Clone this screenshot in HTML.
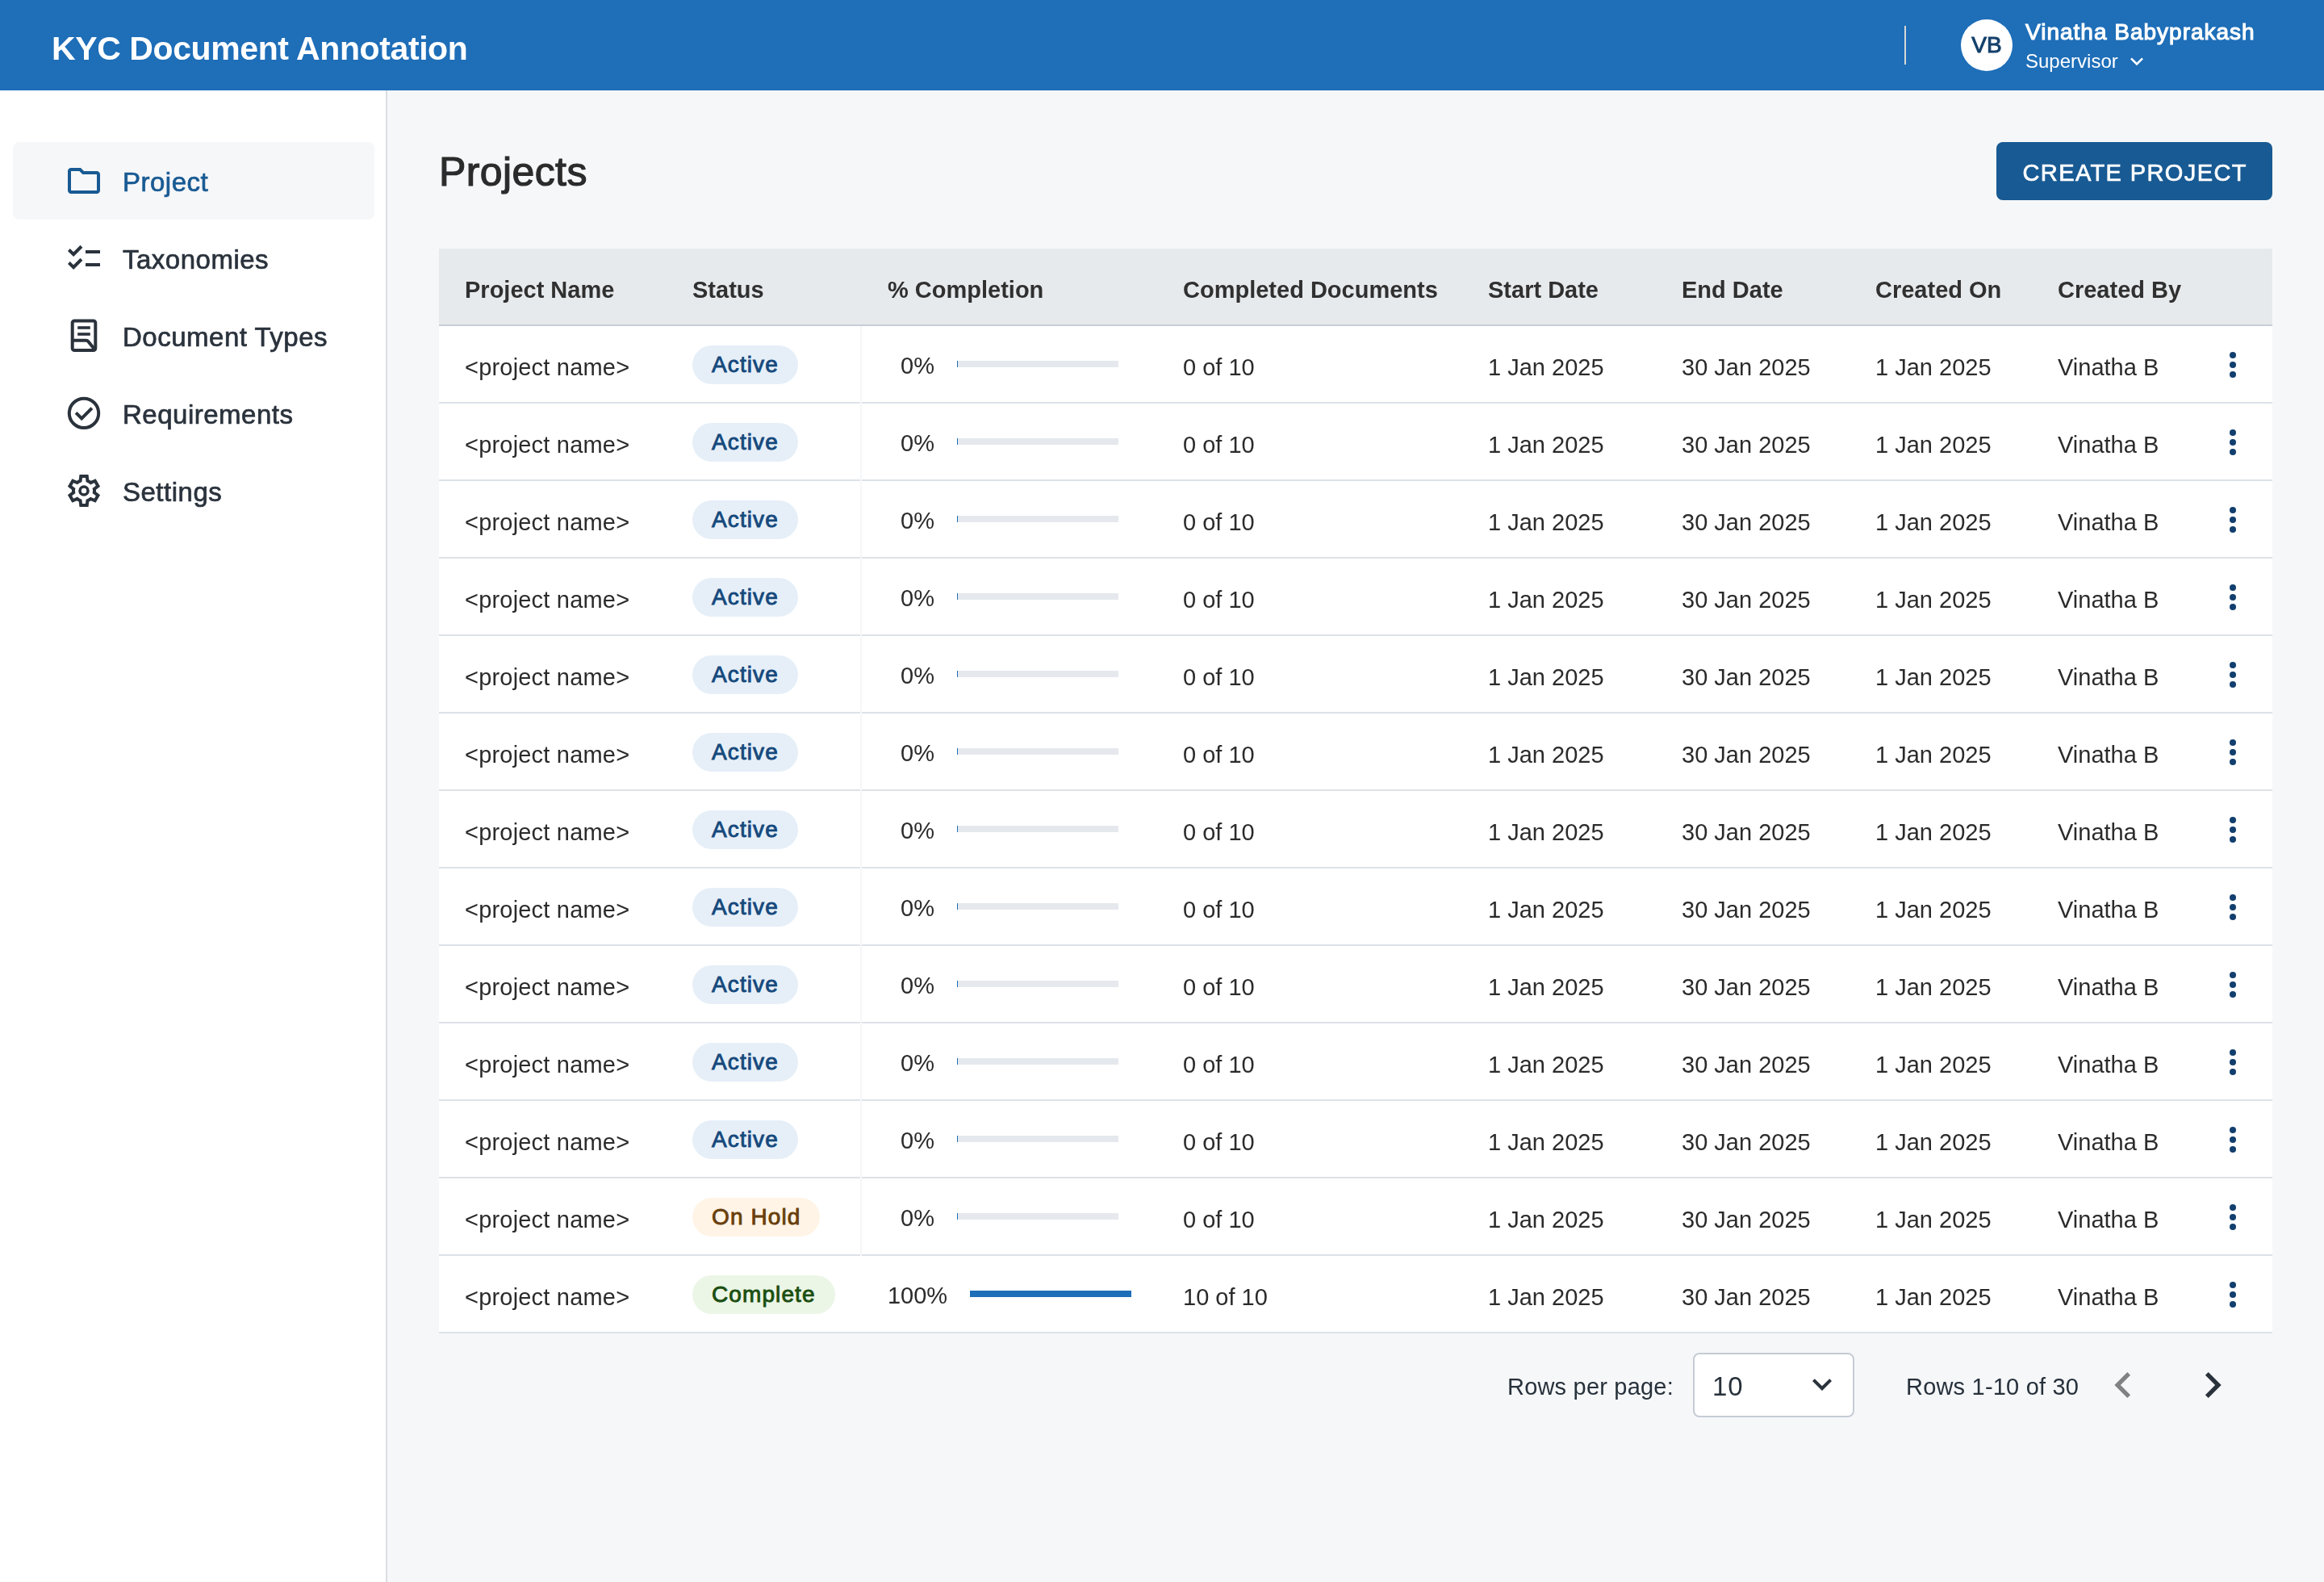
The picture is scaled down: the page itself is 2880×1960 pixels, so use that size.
<!DOCTYPE html>
<html><head><meta charset="utf-8">
<style>
*{box-sizing:border-box;margin:0;padding:0}
html,body{width:1440px;height:980px;overflow:hidden}
body{filter:grayscale(0.0001)}
@media (min-width:2000px){html{zoom:2}}
body{font-family:"Liberation Sans",sans-serif;background:#f6f7f9;color:#2b2b2b;position:relative}
.abs{position:absolute}
#hdr{position:absolute;left:0;top:0;width:1440px;height:56px;background:#1e6eb8}
#title{position:absolute;left:32px;top:2px;height:56px;line-height:56px;font-size:20.5px;font-weight:700;letter-spacing:-.2px;color:#fff;white-space:nowrap}
#vdiv{position:absolute;left:1180px;top:16px;width:1px;height:24px;background:#d8d8d8}
#avatar{position:absolute;left:1215px;top:12px;width:32px;height:32px;border-radius:50%;background:#fff;color:#14406b;-webkit-text-stroke:.5px #14406b;font-size:14px;line-height:32px;text-align:center}
#uname{position:absolute;left:1255px;top:11px;font-size:14px;-webkit-text-stroke:.55px #fff;letter-spacing:.5px;color:#fff;white-space:nowrap;line-height:18px}
#urole{position:absolute;left:1255px;top:31px;font-size:12px;color:#fff;white-space:nowrap;line-height:14px}
#side{position:absolute;left:0;top:56px;width:240px;height:924px;background:#fff;border-right:1px solid #d9dee4}
.nav{position:absolute;left:8px;width:224px;height:48px;border-radius:4px;color:#2a323c;font-size:16.5px}
.nav.act{background:#f6f7f9;color:#185a93}
.nav svg{position:absolute;left:32px;top:12px;width:24px;height:24px}
.nav span{position:absolute;left:68px;top:1px;line-height:48px;white-space:nowrap;letter-spacing:.25px;-webkit-text-stroke:.35px currentColor}
#ptitle{position:absolute;left:272px;top:92.5px;font-size:25px;line-height:28px;letter-spacing:.2px;-webkit-text-stroke:.6px #2b2b2b;color:#2b2b2b;white-space:nowrap}
#btn{position:absolute;left:1237px;top:88px;width:171px;height:36px;border-radius:4px;background:#185a93;color:#fff;font-size:14.5px;letter-spacing:.7px;-webkit-text-stroke:.35px #fff;text-align:center;line-height:36px;white-space:nowrap;padding-left:.7px}
#tbl{position:absolute;left:272px;top:154px;width:1136px}
.th{position:absolute;left:0;top:0;width:1136px;height:48px;background:#e7eaed;border-bottom:1px solid #c6cdd5}
.tr{position:absolute;left:0;width:1136px;height:48px;background:#fff;border-bottom:1px solid #dde2e8}
.c{position:absolute;top:2px;line-height:47px;font-size:14.5px;white-space:nowrap}
.th .c{font-weight:700;color:#303030}
.tr .c{letter-spacing:0}
.pn{letter-spacing:.1px!important}
.pill{position:absolute;top:12px;height:24px;border-radius:12px;line-height:24px;font-weight:400;font-size:14px;letter-spacing:.55px;-webkit-text-stroke:.45px currentColor;padding:0 12px;white-space:nowrap}
.pa{background:#e6eff8;color:#15497c}
.ph{background:#fff4e6;color:#683f0c}
.pc{background:#ebf6e6;color:#1b4e10}
.comp{position:absolute;top:0;height:47px;left:261px;width:185px;display:flex;align-items:center;justify-content:center}
.comp b{font-weight:400;font-size:14.5px;position:relative;top:1px}
.bar{margin-left:14px;width:100px;height:4px;background:#e5e9ed;position:relative}
.bar i{position:absolute;left:0;top:0;height:4px;background:#1e6eb8}
.keb{position:absolute;left:1099.5px;top:12px;width:24px;height:24px}
#sep{position:absolute;left:261px;top:48px;width:1px;height:576px;background:#f6f7f9}
.pg{position:absolute;font-size:14.5px;white-space:nowrap;letter-spacing:.1px;color:#27313b}
#sel{position:absolute;left:1049px;top:838px;width:100px;height:40px;border:1px solid #c5ccd5;border-radius:4px;background:#fff}
</style></head><body>
<div id="hdr">
  <div id="title">KYC Document Annotation</div>
  <div id="vdiv"></div>
  <div id="avatar">VB</div>
  <div id="uname">Vinatha Babyprakash</div>
  <div id="urole">Supervisor</div>
  <svg class="abs" style="left:1316px;top:30px" width="16" height="16" viewBox="0 0 24 24"><path fill="#fff" d="M16.59 8.59L12 13.17 7.41 8.59 6 10l6 6 6-6z"/></svg>
</div>
<div id="side">
<div class="nav act" style="top:32px"><svg viewBox="0 -960 960 960"><path fill="currentColor" d="M160-160q-33 0-56.5-23.5T80-240v-480q0-33 23.5-56.5T160-800h240l80 80h320q33 0 56.5 23.5T880-640v400q0 33-23.5 56.5T800-160H160Zm0-80h640v-400H447l-80-80H160v480Zm0 0v-480 480Z"/></svg><span>Project</span></div>
<div class="nav" style="top:80px"><svg viewBox="0 -960 960 960"><path fill="currentColor" d="M222-200 80-342l56-56 85 85 170-170 56 57-225 226Zm0-320L80-662l56-56 85 85 170-170 56 57-225 226Zm298 240v-80h360v80H520Zm0-320v-80h360v80H520Z"/></svg><span>Taxonomies</span></div>
<div class="nav" style="top:128px"><svg viewBox="0 0 24 24"><g fill="none" stroke="currentColor" stroke-width="2"><rect x="4.85" y="2.75" width="14.3" height="18.25" rx="1.3"/><path d="M4.85 14.9H13.4Q14.2 14.9 14.75 15.6L19.2 21.1"/></g><rect x="8.1" y="6.1" width="7.8" height="1.8" fill="currentColor"/><rect x="8.1" y="10.1" width="7.8" height="1.8" fill="currentColor"/></svg><span>Document Types</span></div>
<div class="nav" style="top:176px"><svg viewBox="0 0 24 24"><g fill="none" stroke="currentColor" stroke-width="2"><circle cx="12" cy="11.95" r="9.1"/><path d="M7.05 11.65L10.6 15.2L16.95 8.85"/></g></svg><span>Requirements</span></div>
<div class="nav" style="top:224px"><svg viewBox="0 -960 960 960"><path fill="currentColor" fill-rule="evenodd" d="m370-80-16-128q-13-5-24.5-12T307-235l-119 50L78-375l103-78q-1-7-1-13.5v-27q0-6.5 1-13.5L78-585l110-190 119 50q11-8 23-15t24-12l16-128h220l16 128q13 5 24.5 12t22.5 15l119-50 110 190-103 78q1 7 1 13.5v27q0 6.5-2 13.5l103 78-110 190-118-50q-11 8-23 15t-24 12L590-80H370Zm70-80h79l14-106q31-8 57.5-23.5T639-327l99 41 39-68-86-65q5-14 7-29.5t2-31.5q0-16-2-31.5t-7-29.5l86-65-39-68-99 42q-22-23-48.5-38.5T533-694l-13-106h-79l-14 106q-31 8-57.5 23.5T321-633l-99-41-39 68 86 64q-5 15-7 30t-2 32q0 16 2 31t7 30l-86 65 39 68 99-42q22 23 48.5 38.5T427-266l13 106Z"/><circle cx="480" cy="-480" r="100" fill="none" stroke="currentColor" stroke-width="72"/></svg><span>Settings</span></div>
</div>
<div id="ptitle">Projects</div>
<div id="btn"><span style="position:relative;top:1px">CREATE PROJECT</span></div>
<div id="tbl">
<div class="th"><div class="c" style="left:16px">Project Name</div><div class="c" style="left:157px">Status</div><div class="c" style="left:278px">% Completion</div><div class="c" style="left:461px">Completed Documents</div><div class="c" style="left:650px">Start Date</div><div class="c" style="left:770px">End Date</div><div class="c" style="left:890px">Created On</div><div class="c" style="left:1003px">Created By</div></div>
<div class="tr" style="top:48px"><div class="c pn" style="left:16px">&lt;project name&gt;</div><div class="pill pa" style="left:157px">Active</div><div class="comp"><b>0%</b><div class="bar"><i style="width:0.75px"></i></div></div><div class="c" style="left:461px">0 of 10</div><div class="c" style="left:650px">1 Jan 2025</div><div class="c" style="left:770px">30 Jan 2025</div><div class="c" style="left:890px">1 Jan 2025</div><div class="c" style="left:1003px">Vinatha B</div><svg class="keb" viewBox="0 0 24 24"><circle cx="12" cy="6" r="2" fill="#123f6e"/><circle cx="12" cy="12" r="2" fill="#123f6e"/><circle cx="12" cy="18" r="2" fill="#123f6e"/></svg></div>
<div class="tr" style="top:96px"><div class="c pn" style="left:16px">&lt;project name&gt;</div><div class="pill pa" style="left:157px">Active</div><div class="comp"><b>0%</b><div class="bar"><i style="width:0.75px"></i></div></div><div class="c" style="left:461px">0 of 10</div><div class="c" style="left:650px">1 Jan 2025</div><div class="c" style="left:770px">30 Jan 2025</div><div class="c" style="left:890px">1 Jan 2025</div><div class="c" style="left:1003px">Vinatha B</div><svg class="keb" viewBox="0 0 24 24"><circle cx="12" cy="6" r="2" fill="#123f6e"/><circle cx="12" cy="12" r="2" fill="#123f6e"/><circle cx="12" cy="18" r="2" fill="#123f6e"/></svg></div>
<div class="tr" style="top:144px"><div class="c pn" style="left:16px">&lt;project name&gt;</div><div class="pill pa" style="left:157px">Active</div><div class="comp"><b>0%</b><div class="bar"><i style="width:0.75px"></i></div></div><div class="c" style="left:461px">0 of 10</div><div class="c" style="left:650px">1 Jan 2025</div><div class="c" style="left:770px">30 Jan 2025</div><div class="c" style="left:890px">1 Jan 2025</div><div class="c" style="left:1003px">Vinatha B</div><svg class="keb" viewBox="0 0 24 24"><circle cx="12" cy="6" r="2" fill="#123f6e"/><circle cx="12" cy="12" r="2" fill="#123f6e"/><circle cx="12" cy="18" r="2" fill="#123f6e"/></svg></div>
<div class="tr" style="top:192px"><div class="c pn" style="left:16px">&lt;project name&gt;</div><div class="pill pa" style="left:157px">Active</div><div class="comp"><b>0%</b><div class="bar"><i style="width:0.75px"></i></div></div><div class="c" style="left:461px">0 of 10</div><div class="c" style="left:650px">1 Jan 2025</div><div class="c" style="left:770px">30 Jan 2025</div><div class="c" style="left:890px">1 Jan 2025</div><div class="c" style="left:1003px">Vinatha B</div><svg class="keb" viewBox="0 0 24 24"><circle cx="12" cy="6" r="2" fill="#123f6e"/><circle cx="12" cy="12" r="2" fill="#123f6e"/><circle cx="12" cy="18" r="2" fill="#123f6e"/></svg></div>
<div class="tr" style="top:240px"><div class="c pn" style="left:16px">&lt;project name&gt;</div><div class="pill pa" style="left:157px">Active</div><div class="comp"><b>0%</b><div class="bar"><i style="width:0.75px"></i></div></div><div class="c" style="left:461px">0 of 10</div><div class="c" style="left:650px">1 Jan 2025</div><div class="c" style="left:770px">30 Jan 2025</div><div class="c" style="left:890px">1 Jan 2025</div><div class="c" style="left:1003px">Vinatha B</div><svg class="keb" viewBox="0 0 24 24"><circle cx="12" cy="6" r="2" fill="#123f6e"/><circle cx="12" cy="12" r="2" fill="#123f6e"/><circle cx="12" cy="18" r="2" fill="#123f6e"/></svg></div>
<div class="tr" style="top:288px"><div class="c pn" style="left:16px">&lt;project name&gt;</div><div class="pill pa" style="left:157px">Active</div><div class="comp"><b>0%</b><div class="bar"><i style="width:0.75px"></i></div></div><div class="c" style="left:461px">0 of 10</div><div class="c" style="left:650px">1 Jan 2025</div><div class="c" style="left:770px">30 Jan 2025</div><div class="c" style="left:890px">1 Jan 2025</div><div class="c" style="left:1003px">Vinatha B</div><svg class="keb" viewBox="0 0 24 24"><circle cx="12" cy="6" r="2" fill="#123f6e"/><circle cx="12" cy="12" r="2" fill="#123f6e"/><circle cx="12" cy="18" r="2" fill="#123f6e"/></svg></div>
<div class="tr" style="top:336px"><div class="c pn" style="left:16px">&lt;project name&gt;</div><div class="pill pa" style="left:157px">Active</div><div class="comp"><b>0%</b><div class="bar"><i style="width:0.75px"></i></div></div><div class="c" style="left:461px">0 of 10</div><div class="c" style="left:650px">1 Jan 2025</div><div class="c" style="left:770px">30 Jan 2025</div><div class="c" style="left:890px">1 Jan 2025</div><div class="c" style="left:1003px">Vinatha B</div><svg class="keb" viewBox="0 0 24 24"><circle cx="12" cy="6" r="2" fill="#123f6e"/><circle cx="12" cy="12" r="2" fill="#123f6e"/><circle cx="12" cy="18" r="2" fill="#123f6e"/></svg></div>
<div class="tr" style="top:384px"><div class="c pn" style="left:16px">&lt;project name&gt;</div><div class="pill pa" style="left:157px">Active</div><div class="comp"><b>0%</b><div class="bar"><i style="width:0.75px"></i></div></div><div class="c" style="left:461px">0 of 10</div><div class="c" style="left:650px">1 Jan 2025</div><div class="c" style="left:770px">30 Jan 2025</div><div class="c" style="left:890px">1 Jan 2025</div><div class="c" style="left:1003px">Vinatha B</div><svg class="keb" viewBox="0 0 24 24"><circle cx="12" cy="6" r="2" fill="#123f6e"/><circle cx="12" cy="12" r="2" fill="#123f6e"/><circle cx="12" cy="18" r="2" fill="#123f6e"/></svg></div>
<div class="tr" style="top:432px"><div class="c pn" style="left:16px">&lt;project name&gt;</div><div class="pill pa" style="left:157px">Active</div><div class="comp"><b>0%</b><div class="bar"><i style="width:0.75px"></i></div></div><div class="c" style="left:461px">0 of 10</div><div class="c" style="left:650px">1 Jan 2025</div><div class="c" style="left:770px">30 Jan 2025</div><div class="c" style="left:890px">1 Jan 2025</div><div class="c" style="left:1003px">Vinatha B</div><svg class="keb" viewBox="0 0 24 24"><circle cx="12" cy="6" r="2" fill="#123f6e"/><circle cx="12" cy="12" r="2" fill="#123f6e"/><circle cx="12" cy="18" r="2" fill="#123f6e"/></svg></div>
<div class="tr" style="top:480px"><div class="c pn" style="left:16px">&lt;project name&gt;</div><div class="pill pa" style="left:157px">Active</div><div class="comp"><b>0%</b><div class="bar"><i style="width:0.75px"></i></div></div><div class="c" style="left:461px">0 of 10</div><div class="c" style="left:650px">1 Jan 2025</div><div class="c" style="left:770px">30 Jan 2025</div><div class="c" style="left:890px">1 Jan 2025</div><div class="c" style="left:1003px">Vinatha B</div><svg class="keb" viewBox="0 0 24 24"><circle cx="12" cy="6" r="2" fill="#123f6e"/><circle cx="12" cy="12" r="2" fill="#123f6e"/><circle cx="12" cy="18" r="2" fill="#123f6e"/></svg></div>
<div class="tr" style="top:528px"><div class="c pn" style="left:16px">&lt;project name&gt;</div><div class="pill pa" style="left:157px">Active</div><div class="comp"><b>0%</b><div class="bar"><i style="width:0.75px"></i></div></div><div class="c" style="left:461px">0 of 10</div><div class="c" style="left:650px">1 Jan 2025</div><div class="c" style="left:770px">30 Jan 2025</div><div class="c" style="left:890px">1 Jan 2025</div><div class="c" style="left:1003px">Vinatha B</div><svg class="keb" viewBox="0 0 24 24"><circle cx="12" cy="6" r="2" fill="#123f6e"/><circle cx="12" cy="12" r="2" fill="#123f6e"/><circle cx="12" cy="18" r="2" fill="#123f6e"/></svg></div>
<div class="tr" style="top:576px"><div class="c pn" style="left:16px">&lt;project name&gt;</div><div class="pill ph" style="left:157px">On Hold</div><div class="comp"><b>0%</b><div class="bar"><i style="width:0.75px"></i></div></div><div class="c" style="left:461px">0 of 10</div><div class="c" style="left:650px">1 Jan 2025</div><div class="c" style="left:770px">30 Jan 2025</div><div class="c" style="left:890px">1 Jan 2025</div><div class="c" style="left:1003px">Vinatha B</div><svg class="keb" viewBox="0 0 24 24"><circle cx="12" cy="6" r="2" fill="#123f6e"/><circle cx="12" cy="12" r="2" fill="#123f6e"/><circle cx="12" cy="18" r="2" fill="#123f6e"/></svg></div>
<div class="tr" style="top:624px"><div class="c pn" style="left:16px">&lt;project name&gt;</div><div class="pill pc" style="left:157px">Complete</div><div class="comp"><b>100%</b><div class="bar"><i style="width:100px"></i></div></div><div class="c" style="left:461px">10 of 10</div><div class="c" style="left:650px">1 Jan 2025</div><div class="c" style="left:770px">30 Jan 2025</div><div class="c" style="left:890px">1 Jan 2025</div><div class="c" style="left:1003px">Vinatha B</div><svg class="keb" viewBox="0 0 24 24"><circle cx="12" cy="6" r="2" fill="#123f6e"/><circle cx="12" cy="12" r="2" fill="#123f6e"/><circle cx="12" cy="18" r="2" fill="#123f6e"/></svg></div>
<div id="sep"></div>
</div>
<div class="pg" style="left:934px;top:849px;line-height:20px">Rows per page:</div>
<div id="sel"></div>
<div class="pg" style="left:1061px;top:848px;line-height:22px;font-size:16.5px;letter-spacing:.5px">10</div>
<svg class="abs" style="left:1117px;top:845.5px" width="24" height="24" viewBox="0 0 24 24"><path fill="#2a323c" d="M16.59 8.59L12 13.17 7.41 8.59 6 10l6 6 6-6z"/></svg>
<div class="pg" style="left:1181px;top:849px;line-height:20px;letter-spacing:.1px">Rows 1-10 of 30</div>
<svg class="abs" style="left:1299.5px;top:842px" width="32" height="32" viewBox="0 0 24 24"><path fill="#828282" d="M15.41 7.41L14 6l-6 6 6 6 1.41-1.41L10.83 12z"/></svg>
<svg class="abs" style="left:1355px;top:842px" width="32" height="32" viewBox="0 0 24 24"><path fill="#2a323c" d="M10 6L8.59 7.41 13.17 12l-4.58 4.59L10 18l6-6z"/></svg>
</body></html>
